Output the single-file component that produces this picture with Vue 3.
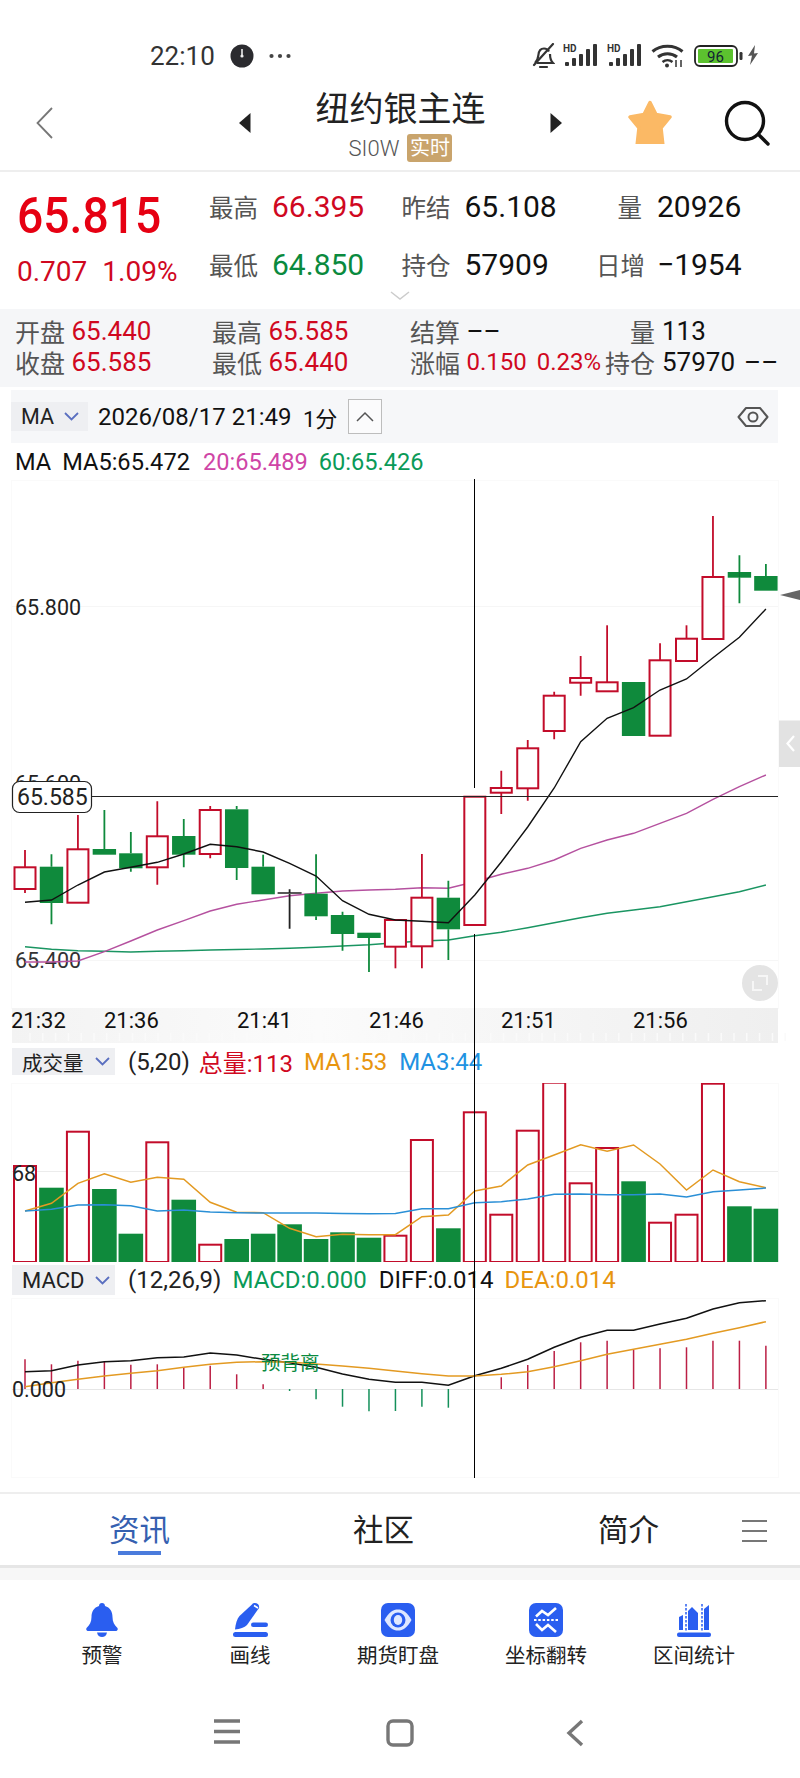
<script setup>
const xs = Array.from({ length: 29 }, (_, i) => 25 + 26.46 * i)
const RED = '#c20c2a'
const GREEN = '#0f8a3c'

// [colour, wick top, body top, body bottom, wick bottom]
const raw = [
  ['r', 850, 867.3, 889, 893], ['g', 854.3, 866.7, 903, 924.3], ['r', 815, 849.3, 902.7, 902.7],
  ['g', 810, 849, 854.7, 854.7], ['g', 832, 853.3, 868.3, 871.7], ['r', 801.3, 836.3, 867.3, 884.7],
  ['g', 819, 836, 854.7, 867.3], ['r', 806, 810, 854, 858.3], ['g', 806, 809.3, 868, 880],
  ['g', 854.7, 866.7, 894.3, 894.3], ['k', 889.3, 893, 894, 928.7], ['g', 854.3, 893.7, 916.3, 920],
  ['g', 911.7, 915, 934, 950.7], ['g', 932.7, 932.7, 938, 972], ['r', 920, 920, 946.7, 968.3],
  ['r', 854, 897.7, 946.3, 968.3], ['g', 880.7, 897.7, 929.3, 960], ['r', 796.7, 796.7, 925, 925],
  ['r', 770.7, 788, 792.7, 814], ['r', 740, 748.3, 788.3, 800.7], ['r', 691.7, 695.7, 731, 739.3],
  ['r', 656, 678, 682.7, 695.7], ['r', 625.3, 682.3, 691.3, 691.3], ['g', 682, 682, 736, 736],
  ['r', 643.3, 660.3, 735.7, 735.7], ['r', 625.3, 638.7, 661, 661], ['r', 516, 577, 639, 639],
  ['g', 555.3, 572, 577.7, 603.3], ['g', 564, 576, 590.7, 590.7]
]
const candles = raw.map((c, i) => ({
  x: xs[i],
  kind: c[0],
  color: c[0] === 'r' ? RED : c[0] === 'g' ? GREEN : '#222',
  wt: c[1],
  top: c[2],
  bot: c[3],
  wb: c[4]
}))

const line = ys => ys.map((y, i) => `${xs[i].toFixed(1)},${y}`).join(' ')

const ma5 = line([902.3, 900, 885, 872, 867.3, 862.3, 854, 844.3, 846.7, 852, 863.3, 876, 900.7, 914.3, 920, 921.3, 922.7, 895, 862, 827, 788, 741.7, 718.3, 707.7, 690, 679, 657.7, 637.3, 609])
const ma20 = line([962, 962, 961, 951.7, 941, 930, 920.7, 911, 904.3, 900, 895.7, 893.3, 891, 890, 889.3, 887.7, 888.3, 881.7, 874.3, 868.3, 860, 848.3, 840, 833.3, 823.3, 813.3, 799.3, 786.7, 775])
const ma60 = line([946.7, 949.3, 950.7, 951.3, 952, 951.3, 950.7, 950, 949.5, 949, 948.3, 947.3, 946, 944.7, 942.8, 941, 940, 935.7, 932.3, 927.7, 922.7, 917.7, 913.3, 910, 906.7, 901.7, 896.7, 891.7, 885])

const volTops = [1166, 1187.7, 1131.7, 1189, 1233.7, 1142.3, 1199.7, 1244.7, 1239, 1233.7, 1224.3, 1239, 1232.3, 1237.7, 1235.7, 1140, 1228.3, 1112.3, 1214.7, 1130.7, 1082.7, 1183.3, 1148, 1181.3, 1222.7, 1214.7, 1083.7, 1206.3, 1208.7]
const volRed = new Set([0, 2, 5, 7, 14, 15, 17, 18, 19, 20, 21, 22, 24, 25, 26])
const vols = volTops.map((top, i) => ({ x: xs[i], top, red: volRed.has(i) }))
const ma1 = line([1211, 1203.3, 1183.3, 1173.7, 1182.3, 1177.3, 1179.3, 1202.3, 1212.3, 1212.7, 1228.3, 1236.7, 1234.3, 1234.7, 1234.7, 1216.7, 1215, 1191, 1186, 1165, 1155, 1144.7, 1151.3, 1145, 1164, 1190, 1170, 1181.7, 1187.7])
const ma3 = line([1211, 1209.3, 1205, 1204.7, 1205.7, 1211, 1210, 1212, 1212.7, 1213, 1213, 1213, 1213.4, 1213.7, 1213.5, 1208.7, 1208.7, 1202.7, 1201.7, 1199, 1194.3, 1194, 1194.7, 1194.7, 1194, 1197, 1191.7, 1190, 1188])

const macdEnds = [1359.3, 1364.3, 1360.7, 1361.7, 1364.7, 1364.3, 1367.7, 1365.7, 1374.3, 1384.3, 1391, 1399.3, 1406.7, 1411.3, 1411, 1406.7, 1407.7, 1389, 1377.3, 1365, 1351, 1342.3, 1340.7, 1350, 1348.3, 1347.3, 1340.7, 1340.7, 1345.7]
const bars = macdEnds.map((y, i) => ({ x: xs[i], y, color: y > 1389 ? '#14905a' : '#bb1f45' }))
const diff = line([1371.7, 1370.7, 1365, 1361.7, 1360.7, 1357.7, 1357, 1353, 1355, 1359.3, 1362.7, 1367.3, 1374, 1379.3, 1382.3, 1382.3, 1385.3, 1375.7, 1368.3, 1359.3, 1347.3, 1337.3, 1330.3, 1330.3, 1324, 1318.3, 1309, 1302.7, 1300.7])
const dea = line([1386.7, 1382.7, 1379.3, 1376, 1373.3, 1370.7, 1367.3, 1364.3, 1362.3, 1361.7, 1362, 1364, 1366, 1368.3, 1371, 1373.7, 1376, 1376, 1374.3, 1371.7, 1366.7, 1360.7, 1354.3, 1349.3, 1344.3, 1339.3, 1333.3, 1327.7, 1321.7])

const times = [['21:32', 11], ['21:36', 104], ['21:41', 237], ['21:46', 369], ['21:51', 501], ['21:56', 633]]
const ticks = Array.from({ length: 60 }, (_, i) => 30 + i * 12.8)
const signal = [0, 7, 14, 21, 28].map((x, i) => ({ x, h: [4, 8, 12, 17, 22][i] }))
</script>

<template>
  <div class="page">
    <header class="status">
      <span class="clock-time">22:10</span>
      <svg class="clock-ic" width="24" height="26" viewBox="0 0 24 26">
        <circle cx="12" cy="13" r="11.5" fill="#2b2b2f" />
        <path d="M12 6v7" stroke="#eee" stroke-width="1.6" />
        <circle cx="12" cy="13" r="1.6" fill="#eee" />
      </svg>
      <svg class="dots" width="22" height="6" viewBox="0 0 22 6">
        <circle cx="2.5" cy="3" r="2.1" fill="#444" />
        <circle cx="11" cy="3" r="2.1" fill="#444" />
        <circle cx="19.5" cy="3" r="2.1" fill="#444" />
      </svg>
      <div class="status-right">
        <svg class="bell" width="24" height="26" viewBox="0 0 24 26" fill="none" stroke="#333" stroke-width="2.2">
          <path d="M4 20c2-2 3-4 3.4-8 .4-4 2.6-6.500 5.600-6.500 2.200 0 4 1 5 3" />
          <path d="M19 11c0 4 1 7 3 9H6" />
          <path d="M9 24h7M22 1 3 22" stroke-linecap="round" />
        </svg>
        <svg v-for="n in 2" :key="n" class="sig" width="34" height="23" viewBox="0 0 34 23">
          <rect v-for="b in signal" :key="b.x" :x="b.x + 2" :y="23 - b.h" width="4" :height="b.h" rx="1" fill="#333" />
          <text x="0" y="9" class="hd">HD</text>
        </svg>
        <svg class="wifi" width="33" height="24" viewBox="0 0 33 24" fill="none" stroke="#333" stroke-width="3">
          <path d="M1.500 7.500C9.500 .5 23.500 .5 31.500 7.500" />
          <path d="M7 13c5.500-4.500 13.500-4.500 19 0" />
          <path d="M11.500 18c3-2.500 7-2.500 10 0" stroke-width="2.400" />
          <circle cx="16" cy="21.500" r="2" fill="#333" stroke="none" />
          <path d="M25 16v7M30 16v7" stroke-width="1.500" />
        </svg>
        <svg class="batt" width="49" height="22" viewBox="0 0 49 22">
          <rect x="1" y="1" width="42" height="20" rx="5" fill="#fff" stroke="#222" stroke-width="1.800" />
          <rect x="4" y="4" width="35" height="14" rx="1" fill="#5cc22f" />
          <text x="21.500" y="16.500" class="batt-t">96</text>
          <rect x="45.500" y="7" width="3" height="8" rx="1.200" fill="#333" />
        </svg>
        <svg class="bolt" width="12" height="20" viewBox="0 0 12 20">
          <path d="M8 0 1 11l4-.5L3 20l8-12-4 .5z" fill="#555" />
        </svg>
      </div>
    </header>

    <nav class="topbar">
      <svg class="back" width="17" height="32" viewBox="0 0 17 32" fill="none">
        <path d="M16 1 1.500 16 16 31" stroke="#777" stroke-width="1.800" />
      </svg>
      <svg class="tri" width="12" height="20" viewBox="0 0 12 20"><path d="M11.500 0v20L0 10z" fill="#222" /></svg>
      <div class="title-box">
        <div class="title">纽约银主连</div>
        <div class="sub"><span>SI0W</span><em>实时</em></div>
      </div>
      <svg class="tri" width="12" height="20" viewBox="0 0 12 20"><path d="M.5 0v20L12 10z" fill="#222" /></svg>
      <svg class="star" width="44" height="44" viewBox="0 0 44 44">
        <path d="M22 2.500 28 14.500 42 17 33 28 35 46H9L11 28 2 17 16 14.500z" fill="#fbb965" stroke="#fbb965" stroke-width="3.500" stroke-linejoin="round" />
      </svg>
      <svg class="search" width="46" height="46" viewBox="0 0 46 46" fill="none" stroke="#111" stroke-width="3.400">
        <circle cx="21" cy="21" r="18.500" />
        <path d="M34.500 34.500 44 44" stroke-linecap="round" />
      </svg>
    </nav>

    <section class="stats">
      <div class="now">
        <div class="big">65.815</div>
        <div class="chg"><span>0.707</span><span>1.09%</span></div>
      </div>
      <div class="stat"><label>最高</label><b class="red">66.395</b></div>
      <div class="stat"><label>昨结</label><b>65.108</b></div>
      <div class="stat end"><label>量</label><b>20926</b></div>
      <div class="stat"><label>最低</label><b class="green">64.850</b></div>
      <div class="stat"><label>持仓</label><b>57909</b></div>
      <div class="stat end"><label>日增</label><b>−1954</b></div>
      <svg class="more" width="20" height="9" viewBox="0 0 20 9" fill="none"><path d="M1 1l9 7 9-7" stroke="#ccc" stroke-width="1.500" /></svg>
    </section>

    <section class="ohlc">
      <div class="cell"><label>开盘</label><b class="red">65.440</b></div>
      <div class="cell"><label>最高</label><b class="red">65.585</b></div>
      <div class="cell"><label>结算</label><b>––</b></div>
      <div class="cell end"><label>量</label><b>113</b></div>
      <div class="cell"><label>收盘</label><b class="red">65.585</b></div>
      <div class="cell"><label>最低</label><b class="red">65.440</b></div>
      <div class="cell"><label>涨幅</label><b class="red small">0.150</b><b class="red small pct">0.23%</b></div>
      <div class="cell end"><label>持仓</label><b>57970</b><b class="tail">––</b></div>
    </section>

    <div class="charts">
      <div class="toolbar">
        <div class="chip ma">MA
          <svg width="15" height="9" viewBox="0 0 15 9" fill="none"><path d="M1 1l6.500 6.500L14 1" stroke="#5a6fc0" stroke-width="1.800" /></svg>
        </div>
        <span class="date">2026/08/17 21:49</span>
        <span class="min">1分</span>
        <span class="up">
          <svg width="18" height="11" viewBox="0 0 18 11" fill="none"><path d="M1 10l8-8 8 8" stroke="#555" stroke-width="1.500" /></svg>
        </span>
        <svg class="eye" width="32" height="22" viewBox="0 0 32 22" fill="none" stroke="#555" stroke-width="2">
          <path d="M1.500 11 9 2h14l7.500 9L23 20H9z" stroke-linejoin="round" />
          <circle cx="16" cy="11" r="4.500" />
        </svg>
      </div>

      <div class="legend">
        <span class="black">MA</span>
        <span class="black">MA5:65.472</span>
        <span class="pink">20:65.489</span>
        <span class="lgreen">60:65.426</span>
      </div>

      <svg class="main" width="800" height="563" viewBox="0 480 800 563">
        <defs>
          <linearGradient id="axisBand" x1="0" x2="1" y1="0" y2="0">
            <stop offset="0" stop-color="#f3f3f3" />
            <stop offset="0.4" stop-color="#fbfbfb" />
            <stop offset="1" stop-color="#efefef" />
          </linearGradient>
        </defs>
        <rect x="11.500" y="480.500" width="767" height="528" fill="#fff" stroke="#fafafa" />
        <path d="M12 606.500H778M12 960.500H778" stroke="#f6f6f6" />
        <text x="15" y="615" class="axis">65.800</text>
        <text x="15" y="791" class="axis">65.600</text>
        <text x="15" y="968" class="axis dim">65.400</text>

        <polyline :points="ma60" fill="none" stroke="#1a9562" stroke-width="1.400" />
        <polyline :points="ma20" fill="none" stroke="#b5519f" stroke-width="1.400" />

        <g v-for="c in candles" :key="c.x">
          <path :d="`M${c.x} ${c.wt}V${c.top}M${c.x} ${c.bot}V${c.wb}`" :stroke="c.color" stroke-width="1.800" />
          <rect v-if="c.kind === 'r'" :x="c.x - 10.500" :y="c.top" width="21" :height="c.bot - c.top" fill="#fff" :stroke="c.color" stroke-width="2" />
          <rect v-else-if="c.kind === 'g'" :x="c.x - 11.700" :y="c.top" width="23.400" :height="c.bot - c.top" :fill="c.color" />
          <path v-else :d="`M${c.x - 12} ${c.top}H${c.x + 12}`" stroke="#222" stroke-width="1.500" />
          <path v-if="c.kind === 'g' && c.x > 700 && c.x < 750" :d="`M${c.x} ${c.top}V${c.bot}`" stroke="#0d6f33" stroke-width="1.200" />
        </g>

        <polyline :points="ma5" fill="none" stroke="#111" stroke-width="1.400" />

        <path d="M92 796.500H778" stroke="#222" stroke-width="1.200" />
        <rect x="12.500" y="781.500" width="79" height="31" rx="7" fill="#fff" stroke="#222" stroke-width="1.200" />
        <text x="17" y="804.500" class="tag">65.585</text>

        <polygon points="780,595 800,590 800,600" fill="#666" />
        <rect x="779" y="720.500" width="21" height="46.500" fill="#e2e2e2" />
        <path d="M794 736l-6.500 7.500 6.500 7.500" fill="none" stroke="#fff" stroke-width="2.200" />

        <circle cx="760" cy="983" r="18" fill="#e4e4e4" />
        <path d="M758 976h9v9M762 990h-9v-9" fill="none" stroke="#f6f6f6" stroke-width="2" />

        <rect x="12" y="1008" width="766" height="35" fill="url(#axisBand)" />
        <path v-for="t in ticks" :key="t" :d="`M${t} 1033v8`" stroke="#fafafa" stroke-width="1.500" />
        <text v-for="t in times" :key="t[0]" :x="t[1]" y="1028" class="time">{{ t[0] }}</text>
      </svg>

      <div class="indicator">
        <div class="chip wide">成交量
          <svg width="15" height="9" viewBox="0 0 15 9" fill="none"><path d="M1 1l6.500 6.500L14 1" stroke="#5a6fc0" stroke-width="1.800" /></svg>
        </div>
        <span class="par">(5,20)</span>
        <span class="red">总量:113</span>
        <span class="orange">MA1:53</span>
        <span class="blue">MA3:44</span>
      </div>

      <svg class="vol" width="800" height="179" viewBox="0 1083 800 179">
        <rect x="11.500" y="1083.500" width="767" height="178" fill="#fff" stroke="#fafafa" />
        <path d="M12 1171.500H778" stroke="#ececec" />
        <g v-for="v in vols" :key="v.x">
          <rect v-if="v.red" :x="v.x - 11" :y="v.top" width="22" :height="1262 - v.top" fill="#fff" :stroke="RED" stroke-width="2" />
          <rect v-else :x="v.x - 12.300" :y="v.top" width="24.600" :height="1262 - v.top" :fill="GREEN" />
        </g>
        <polyline :points="ma1" fill="none" stroke="#e39a22" stroke-width="1.500" />
        <polyline :points="ma3" fill="none" stroke="#2a8fd6" stroke-width="1.500" />
        <text x="12" y="1181" class="axis">68</text>
      </svg>

      <div class="indicator macd-head">
        <div class="chip wide">MACD
          <svg width="15" height="9" viewBox="0 0 15 9" fill="none"><path d="M1 1l6.500 6.500L14 1" stroke="#5a6fc0" stroke-width="1.800" /></svg>
        </div>
        <span class="par">(12,26,9)</span>
        <span class="lgreen">MACD:0.000</span>
        <span class="black">DIFF:0.014</span>
        <span class="orange">DEA:0.014</span>
      </div>

      <svg class="macd" width="800" height="180" viewBox="0 1298 800 180">
        <rect x="11.500" y="1298.500" width="767" height="179" fill="#fff" stroke="#fafafa" />
        <path d="M12 1389.500H778" stroke="#e6e6e6" />
        <path v-for="b in bars" :key="b.x" :d="`M${b.x} 1389V${b.y}`" :stroke="b.color" stroke-width="1.500" />
        <polyline :points="diff" fill="none" stroke="#111" stroke-width="1.500" />
        <polyline :points="dea" fill="none" stroke="#e39a22" stroke-width="1.500" />
        <text x="261" y="1370" class="warn">预背离</text>
        <text x="12" y="1397" class="axis">0.000</text>
      </svg>

      <i class="cross cross-a"></i>
      <i class="cross cross-b"></i>
    </div>

    <div class="tabs">
      <div class="tab active">资讯</div>
      <div class="tab">社区</div>
      <div class="tab">简介</div>
      <svg class="menu" width="25" height="22" viewBox="0 0 25 22"><path d="M0 1h25M0 11h25M0 21h25" stroke="#777" stroke-width="2" /></svg>
    </div>

    <div class="tools">
      <div class="tool">
        <svg width="34" height="34" viewBox="0 0 34 34" fill="#2a5ef0">
          <path d="M17 0c1.800 0 3 1.300 3 3 5 1.500 7.500 5.500 7.500 11 0 5 2 8 4.500 10.500 1.500 1.500.7 3.500-1.500 3.500H3.500C1.300 28 .5 26 2 24.500 4.500 22 6.500 19 6.500 14c0-5.500 2.500-9.500 7.500-11 0-1.700 1.200-3 3-3z" />
          <path d="M12 29.500h10C21.500 32.500 19.500 34 17 34s-4.500-1.500-5-4.500z" />
        </svg>
        <span>预警</span>
      </div>
      <div class="tool">
        <svg width="35" height="34" viewBox="0 0 35 34" fill="#2a5ef0">
          <path d="M20 .5c3-1.500 7 1 6 4.500L14 22c-2.500 2.800-7 4-12 4.500C2.500 21 4 16 6.500 13z" />
          <path d="M21 2.500 25 5" stroke="#fff" stroke-width="1.500" />
          <rect x="18" y="19.500" width="17" height="4.500" rx="2.200" />
          <rect x="0" y="29" width="35" height="5" rx="2.500" />
        </svg>
        <span>画线</span>
      </div>
      <div class="tool">
        <svg width="34" height="34" viewBox="0 0 34 34">
          <rect width="34" height="34" rx="7" fill="#2a5ef0" />
          <path d="M3.500 17C8 9 12 6.500 17 6.500S26 9 30.500 17C26 25 22 27.500 17 27.500S8 25 3.500 17z" fill="#dfe8ff" />
          <circle cx="17" cy="17" r="7.500" fill="#2a5ef0" />
          <ellipse cx="17" cy="17" rx="4.200" ry="5" fill="#dfe8ff" />
        </svg>
        <span>期货盯盘</span>
      </div>
      <div class="tool">
        <svg width="34" height="34" viewBox="0 0 34 34" fill="none">
          <rect width="34" height="34" rx="7" fill="#2a5ef0" />
          <path d="M7 13.500l6-5.500 6 4 8-7M7 21l6 6 6-5 8 7" stroke="#fff" stroke-width="2.600" />
          <path d="M5 17h24" stroke="#fff" stroke-width="1.800" stroke-dasharray="2.500 1.800" />
        </svg>
        <span>坐标翻转</span>
      </div>
      <div class="tool">
        <svg width="34" height="34" viewBox="0 0 34 34" fill="#2a5ef0">
          <path d="M2 27V14l4-2v15zM11 27V8l4-4 6 6v17zM27 27V6l5-4v25z" />
          <path d="M9 1v27M25 1v27" stroke="#2a5ef0" stroke-width="1.500" stroke-dasharray="2.500 1.500" />
          <rect y="29.500" width="34" height="4.500" rx="2" />
        </svg>
        <span>区间统计</span>
      </div>
    </div>

    <footer class="sysnav">
      <svg width="28" height="25" viewBox="0 0 28 25"><path d="M1 2h26M1 12.500h26M1 23h26" stroke="#777" stroke-width="3.600" /></svg>
      <svg width="28" height="28" viewBox="0 0 28 28" fill="none"><rect x="2" y="2" width="24" height="24" rx="5" stroke="#777" stroke-width="3.400" /></svg>
      <svg width="18" height="28" viewBox="0 0 18 28" fill="none"><path d="M16 2 3 14l13 12" stroke="#777" stroke-width="3.400" /></svg>
    </footer>
  </div>
</template>

<style scoped>
.page {
  width: 800px;
  height: 1778px;
  overflow: hidden;
  background: #fff;
  color: #111;
  font-family: Roboto, "Noto Sans CJK SC", sans-serif;
  position: relative;
}
b { font-weight: 400; }
label { color: #555; white-space: nowrap; }
.red { color: #d0081f; }
.green { color: #0a8a3e; }
.black { color: #111; }
.pink { color: #cf45a6; }
.lgreen { color: #0a9a58; }
.orange { color: #e8950f; }
.blue { color: #2192e2; }

/* status bar */
.status {
  height: 80px;
  padding: 43px 41px 0 150px;
  box-sizing: border-box;
  display: flex;
  align-items: flex-start;
  color: #333;
}
.clock-time { font-size: 26px; line-height: 26px; width: 80px; }
.dots { margin: 10px 0 0 15px; }
.status-right {
  margin-left: auto;
  display: flex;
  align-items: flex-start;
}
.sig { margin-left: 8px; overflow: visible; }
.sig + .sig { margin-left: 10px; }
.sig .hd { font: 700 10px Roboto, sans-serif; fill: #333; }
.wifi { margin: 1px 0 0 10px; }
.batt { margin: 2px 0 0 10px; }
.batt-t { font: 400 15px Roboto, sans-serif; fill: #123; text-anchor: middle; }
.bolt { margin: 2px 0 0 4px; }

/* nav */
.topbar {
  height: 92px;
  box-sizing: border-box;
  border-bottom: 2px solid #eeeeee;
  display: flex;
  align-items: flex-start;
}
.back { margin: 27px 0 0 36px; }
.topbar .tri { margin-top: 33px; }
.topbar .tri:nth-of-type(2) { margin-left: 186px; }
.title-box { width: 299px; display: flex; flex-direction: column; align-items: center; }
.title { font-size: 34px; line-height: 42px; margin-top: 8px; color: #222; }
.sub { display: flex; align-items: center; height: 28px; margin-top: 4px; color: #555; font-size: 22px; font-weight: 300; }
.sub em {
  font-style: normal;
  font-size: 20px;
  font-weight: 400;
  line-height: 28px;
  width: 45px;
  text-align: center;
  margin-left: 8px;
  color: #fff;
  background: #c9a46c;
  border-radius: 3px;
}
.star { margin: 20px 0 0 65.500px; }
.search { margin: 19.500px 0 0 52px; }

/* stats */
.stats {
  height: 137px;
  box-sizing: border-box;
  padding: 5px 0 0 17px;
  display: grid;
  grid-template-columns: 192px 192.500px 194.500px 1fr;
  grid-auto-rows: 58px;
  position: relative;
}
.now { grid-row: span 2; }
.big {
  font-size: 50px;
  line-height: 48px;
  color: #e60012;
  margin-top: 15px;
  font-weight: 500;
  transform: scaleX(0.925);
  transform-origin: left center;
}
.chg { display: flex; gap: 15px; margin-top: 15px; font-size: 28px; line-height: 34px; color: #d0081f; }
.stat { display: flex; align-items: center; font-size: 30px; }
.stat label { font-size: 24.500px; margin-right: 14px; }
.stat.end label { width: 46px; text-align: right; margin-right: 15px; }
.more { position: absolute; left: 390px; top: 119px; }

/* open/high/low/close */
.ohlc {
  height: 78px;
  box-sizing: border-box;
  padding: 7px 0 0 15px;
  background: #f5f6f8;
  display: grid;
  grid-template-columns: 197px 198px 190px 1fr;
  grid-auto-rows: 30.500px;
}
.cell { display: flex; align-items: center; font-size: 26px; white-space: nowrap; }
.cell label { font-size: 25px; margin-right: 6.500px; width: 50px; }
.cell.end label { text-align: right; margin-right: 7px; }
.cell.end { margin-left: 5px; }
.cell .small { font-size: 24px; }
.cell .pct { margin-left: 10px; }
.cell .tail { margin-left: 9px; }

/* charts */
.charts { position: relative; margin-top: 3px; }
.toolbar {
  margin: 0 22px 0 11px;
  height: 53px;
  background: #f6f7f9;
  display: flex;
  align-items: center;
  font-size: 24px;
}
.chip {
  display: flex;
  align-items: center;
  background: #eeeff2;
  color: #222;
  box-sizing: border-box;
}
.ma { width: 77px; height: 29px; padding-left: 10px; gap: 10px; font-size: 21.500px; }
.date { margin-left: 10px; }
.min { margin-left: 11.500px; font-size: 22px; }
.up {
  margin-left: 11px;
  width: 34px;
  height: 35px;
  box-sizing: border-box;
  border: 1px solid #bdbdbd;
  background: #fbfbfc;
  display: flex;
  align-items: center;
  justify-content: center;
}
.eye { margin-left: auto; margin-right: 9px; }
.legend {
  height: 37px;
  padding-left: 15px;
  display: flex;
  align-items: center;
  gap: 11px;
  font-size: 23.600px;
  box-sizing: border-box;
}
.legend .pink { margin-left: 2px; }
svg { display: block; }
.axis { font: 400 21.500px Roboto, sans-serif; fill: #222; }
.axis.dim { fill: #333; }
.tag { font: 400 23px Roboto, sans-serif; fill: #222; }
.time { font: 400 22px Roboto, sans-serif; fill: #111; }
.warn { font: 400 19.500px "Noto Sans CJK SC", sans-serif; fill: #0a8a40; }

.indicator {
  height: 40px;
  padding: 5px 0 8px 12px;
  box-sizing: border-box;
  display: flex;
  align-items: center;
  font-size: 24px;
  white-space: nowrap;
}
.wide { width: 103px; height: 27px; padding-left: 10px; gap: 11px; font-size: 20.500px; margin-right: 13px; }
.indicator .par { color: #222; margin-right: 9px; }
.indicator .orange { margin-left: 11px; }
.indicator .blue { margin-left: 12px; }
.macd-head { height: 36px; padding: 3px 0 3px 12px; }
.macd-head .wide { height: 30px; font-size: 22px; }
.macd-head .par { margin-right: 11px; }
.macd-head .black { margin-left: 12px; }

.cross { position: absolute; left: 474px; width: 1px; background: #000; }
.cross-a { top: 89px; height: 309px; }
.cross-b { top: 544px; height: 544px; }

/* tabs */
.tabs {
  margin-top: 14px;
  height: 76px;
  box-sizing: border-box;
  border-top: 2px solid #eeeeee;
  border-bottom: 3px solid #e6e6e6;
  display: grid;
  grid-template-columns: 244px 244px 246px;
  padding-left: 17.500px;
  position: relative;
}
.tab {
  font-size: 30.500px;
  line-height: 40px;
  margin-top: 17px;
  text-align: center;
  color: #222;
  position: relative;
}
.tab.active { color: #3560b0; }
.tab.active::after {
  content: "";
  position: absolute;
  left: 50%;
  margin-left: -21.500px;
  top: 40px;
  width: 43px;
  height: 4px;
  background: #4a7bdc;
}
.menu { position: absolute; left: 742px; top: 26px; }

/* tools */
.tools {
  height: 120px;
  box-sizing: border-box;
  background: linear-gradient(#f7f7f7 0, #f7f7f7 12px, #fff 12px);
  padding: 35px 0 0 28px;
  display: grid;
  grid-template-columns: repeat(5, 148px);
}
.tool {
  display: flex;
  flex-direction: column;
  align-items: center;
  gap: 5px;
  font-size: 20.500px;
  line-height: 28px;
  color: #222;
}

/* system nav */
.sysnav {
  height: 90px;
  padding: 31px 0 0 213px;
  box-sizing: border-box;
  display: flex;
  align-items: flex-start;
}
.sysnav svg:nth-child(2) { margin-left: 145px; }
.sysnav svg:nth-child(3) { margin-left: 152px; }
</style>
